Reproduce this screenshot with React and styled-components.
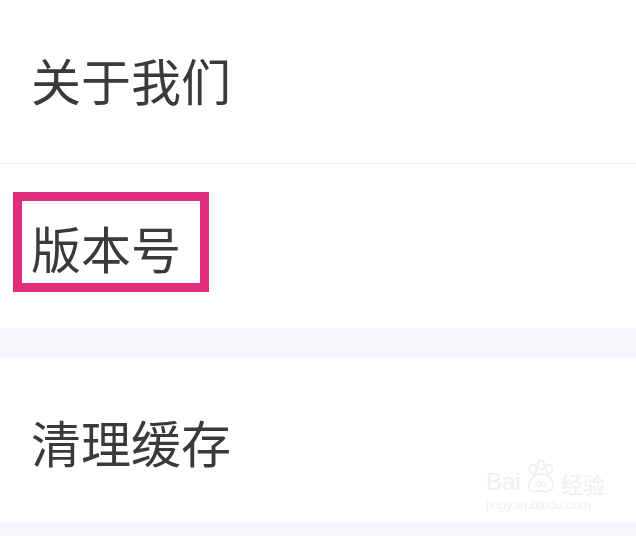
import React from "react";
import styled, { createGlobalStyle } from "styled-components";

const Global = createGlobalStyle`
  html, body { margin: 0; padding: 0; background: #f5f6f9; }
  body { font-family: "Noto Sans CJK SC", "Noto Sans", sans-serif; }
`;

const Page = styled.div`
  position: relative;
  width: 636px;
  height: 536px;
  overflow: hidden;
  background: #f5f6f9;
  display: flex;
  flex-direction: column;
`;

const Row = styled.div`
  height: ${(p) => p.$h}px;
  background: #ffffff;
  display: flex;
  align-items: center;
  padding-left: 31px;
  box-sizing: border-box;
  border-bottom: ${(p) => (p.$divider ? "1px solid #ececec" : "none")};
`;

const Label = styled.span`
  font-size: 50px;
  line-height: 1;
  color: #3a3a3a;
  letter-spacing: 0;
  margin-top: ${(p) => p.$dy || 0}px;
`;

const Highlight = styled.span`
  display: inline-flex;
  align-items: center;
  margin-left: -18px;
  margin-top: -8px;
  width: 196px;
  height: 100px;
  box-sizing: border-box;
  border: 9px solid #df2f7c;
  padding-left: 9px;
`;

const Gap = styled.div`
  height: ${(p) => p.$h}px;
  background: #f5f6f9;
`;

const Watermark = styled.div`
  position: absolute;
  left: 486px;
  top: 460px;
  display: flex;
  flex-direction: column;
  align-items: flex-start;
  color: #f0f0f0;
  font-family: "Liberation Sans", Arial, sans-serif;
  pointer-events: none;
`;

const MarkTop = styled.div`
  display: flex;
  align-items: flex-end;
  gap: 2px;
  font-size: 24px;
  line-height: 1;
`;

const MarkCn = styled.span`
  font-family: "Noto Sans CJK SC", sans-serif;
  font-size: 22px;
`;

const MarkSmall = styled.div`
  font-size: 13px;
  margin-top: 3px;
`;

function Paw() {
  return (
    <svg width="36" height="34" viewBox="0 0 36 34" fill="none" stroke="#ededed" strokeWidth="1.5">
      <ellipse cx="10" cy="9" rx="3.5" ry="4.5" />
      <ellipse cx="18" cy="5" rx="3.5" ry="4.5" />
      <ellipse cx="26" cy="9" rx="3.5" ry="4.5" />
      <path d="M6 26 C6 18 12 14 18 14 C24 14 30 18 30 26 C30 32 24 32 18 31 C12 32 6 32 6 26 Z" />
      <text x="18" y="27" fontSize="10" textAnchor="middle" fill="#ededed" stroke="none" fontFamily="Liberation Sans, sans-serif">du</text>
    </svg>
  );
}

export default function App() {
  return (
    <Page>
      <Global />
      <Row $h={164} $divider>
        <Label $dy={-5}>关于我们</Label>
      </Row>
      <Row $h={164}>
        <Highlight>
          <Label $dy={9}>版本号</Label>
        </Highlight>
      </Row>
      <Gap $h={30} />
      <Row $h={165}>
        <Label $dy={0}>清理缓存</Label>
      </Row>
      <Watermark>
        <MarkTop>
          <span>Bai</span>
          <Paw />
          <MarkCn>经验</MarkCn>
        </MarkTop>
        <MarkSmall>jingyan.baidu.com</MarkSmall>
      </Watermark>
    </Page>
  );
}
